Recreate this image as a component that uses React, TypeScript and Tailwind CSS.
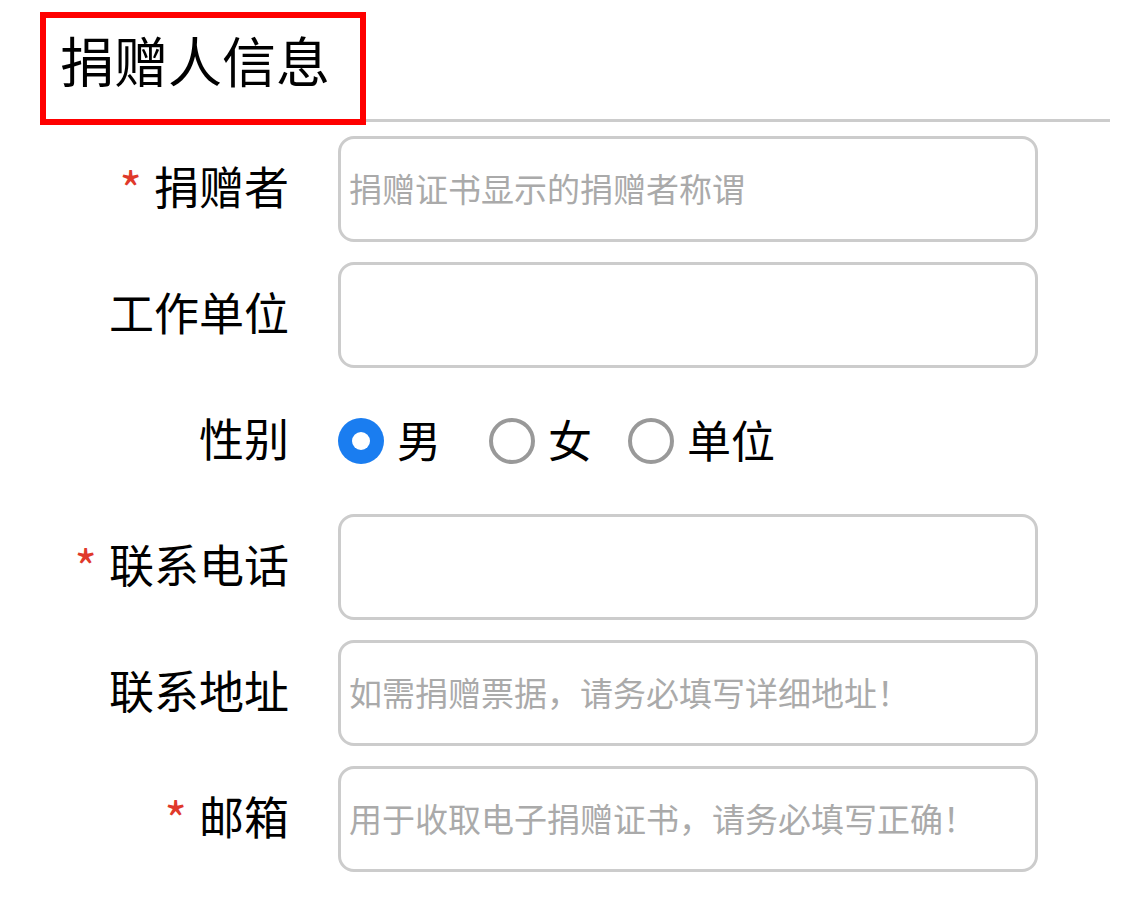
import { useState } from "react";

const font = { fontFamily: '"Noto Sans CJK SC", "Noto Sans", sans-serif' };

function Field({ label, required, placeholder }: { label: string; required?: boolean; placeholder?: string }) {
  return (
    <div className="flex items-center h-[106px]">
      <div className="w-[289px] flex items-center justify-end text-[45px] text-black leading-none pb-[8px]">
        {required && <span className="text-[#e0392b] text-[48px] mr-[12px] mt-[4px]">*</span>}
        <span>{label}</span>
      </div>
      <input
        type="text"
        placeholder={placeholder}
        className="ml-[49px] w-[700px] h-[106px] border-[3px] border-[#cccccc] rounded-[16px] pl-[8px] pb-[3px] text-[33px] text-black placeholder:text-[#aaaaaa] outline-none"
        style={font}
      />
    </div>
  );
}

function Radio({ label, checked, onClick, className }: { label: string; checked: boolean; onClick: () => void; className?: string }) {
  return (
    <button type="button" onClick={onClick} className={"flex items-center gap-[13px] " + (className ?? "")}>
      {checked ? (
        <span className="w-[46px] h-[46px] rounded-full bg-[#1a7df0] flex items-center justify-center">
          <span className="w-[18px] h-[18px] rounded-full bg-white" />
        </span>
      ) : (
        <span className="w-[46px] h-[46px] rounded-full border-[4px] border-[#999999]" />
      )}
      <span className="text-[44px] text-black leading-none pb-[4px]">{label}</span>
    </button>
  );
}

export default function App() {
  const [gender, setGender] = useState("男");

  return (
    <div className="w-[1143px] h-[899px] bg-white" style={font}>
      <div className="flex items-end pl-[40px] pt-[12px] w-[1110px]">
        <div className="w-[326px] h-[113px] border-[6px] border-[#ff0000] flex items-center pl-[14px]">
          <h1 className="text-[54px] text-black leading-none mb-[18px]">捐赠人信息</h1>
        </div>
        <div className="flex-1 h-[3px] bg-[#cccccc] mb-[3px]" />
      </div>

      <div className="flex flex-col gap-[20px] mt-[11px]">
        <Field label="捐赠者" required placeholder="捐赠证书显示的捐赠者称谓" />
        <Field label="工作单位" />
        <div className="flex items-center h-[106px]">
          <div className="w-[289px] text-right text-[45px] text-black leading-none pb-[8px]">性别</div>
          <div className="ml-[49px] flex items-center">
            <Radio label="男" checked={gender === "男"} onClick={() => setGender("男")} />
            <Radio label="女" checked={gender === "女"} onClick={() => setGender("女")} className="ml-[48px]" />
            <Radio label="单位" checked={gender === "单位"} onClick={() => setGender("单位")} className="ml-[36px]" />
          </div>
        </div>
        <Field label="联系电话" required />
        <Field label="联系地址" placeholder="如需捐赠票据，请务必填写详细地址！" />
        <Field label="邮箱" required placeholder="用于收取电子捐赠证书，请务必填写正确！" />
      </div>
    </div>
  );
}
